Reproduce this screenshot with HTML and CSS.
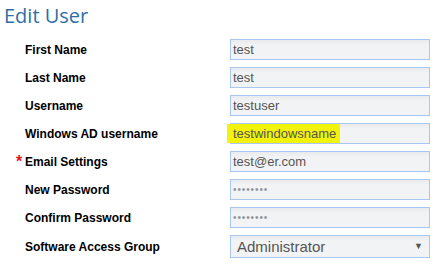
FILE: index.html
```html
<!DOCTYPE html>
<html>
<head>
<meta charset="utf-8">
<link rel="stylesheet" href="styles.css">
</head>
<body>
<h1 class="title">Edit User</h1>
<div class="form">
  <div class="row"><div class="label">First Name</div><div class="field">test</div></div>
  <div class="row"><div class="label">Last Name</div><div class="field">test</div></div>
  <div class="row"><div class="label">Username</div><div class="field">testuser</div></div>
  <div class="row"><div class="label">Windows AD username</div><div class="field"><span class="hl">testwindowsname</span></div></div>
  <div class="row"><div class="label"><span class="req">*</span>Email Settings</div><div class="field">test@er.com</div></div>
  <div class="row"><div class="label">New Password</div><div class="field pw">••••••••</div></div>
  <div class="row"><div class="label">Confirm Password</div><div class="field pw">••••••••</div></div>
  <div class="row"><div class="label">Software Access Group</div><div class="field select"><span>Administrator</span><span class="arrow">▼</span></div></div>
</div>
</body>
</html>
```
FILE: styles.css
```css
html, body { margin: 0; padding: 0; background: #fff; }
body { width: 435px; height: 278px; overflow: hidden; }
.title {
  font-family: "Open Sans", "Noto Sans", sans-serif;
  font-weight: 400;
  font-size: 20px;
  line-height: 26px;
  color: #2e6ea8;
  margin: 0;
  padding: 3px 0 0 4px;
  height: 36px;
  box-sizing: border-box;
}
.form { display: flex; flex-direction: column; gap: 7px; padding: 3px 0 0 25px; }
.row { display: flex; align-items: center; height: 21px; }
.label {
  width: 205px;
  font-family: "Liberation Sans", Arial, sans-serif;
  font-weight: bold;
  font-size: 12px;
  color: #000;
  position: relative;
}
.req {
  position: absolute;
  left: -9px;
  top: -2px;
  color: #e8141b;
  font-size: 16px;
}
.field {
  box-sizing: border-box;
  width: 200px;
  height: 21px;
  border: 1px solid #a6c8f2;
  background: linear-gradient(#e9eaec, #f2f3f4 5px, #f2f3f4);
  font-family: "Liberation Sans", Arial, sans-serif;
  font-size: 13px;
  color: #555;
  line-height: 19px;
  padding-left: 2px;
  white-space: nowrap;
  position: relative;
}
.hl {
  display: inline-block;
  background: #f2f20a;
  margin-left: -6px;
  padding: 0 4px 0 6px;
  height: 19px;
  line-height: 19px;
  vertical-align: top;
  color: #555;
}
.pw { font-size: 10px; color: #8f959c; letter-spacing: 0.9px; line-height: 19px; }
.select {
  height: 23px;
  font-size: 15px;
  line-height: 21px;
  padding-left: 6px;
  display: flex;
  justify-content: space-between;
}
.arrow { font-size: 9px; color: #555; padding-right: 6px; }
.row:last-child { height: 23px; }
```
